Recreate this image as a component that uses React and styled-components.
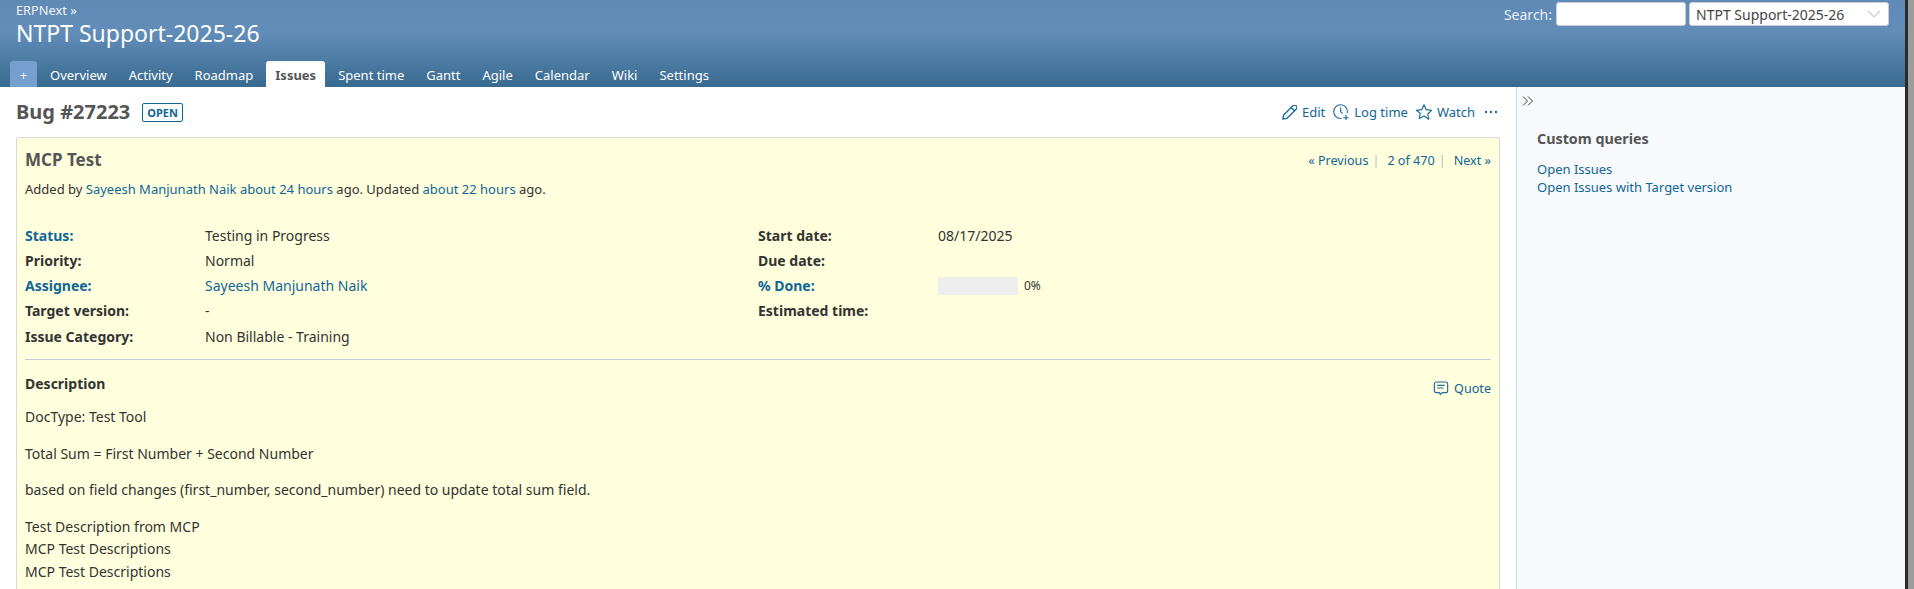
import React from "react";
import styled, { createGlobalStyle } from "styled-components";

const Global = createGlobalStyle`
  html, body { margin: 0; padding: 0; height: 100%; overflow: hidden; background: #fff; }
  body { font-family: "Noto Sans", sans-serif; font-size: 14px; color: #333; }
  #root { height: 100%; }
  a { color: #169; text-decoration: none; }
`;

const Page = styled.div`
  display: flex;
  height: 589px;
  width: 1914px;
`;
const Shell = styled.div`
  width: 1905px;
  display: flex;
  flex-direction: column;
`;
const Scrollbar = styled.div`
  width: 9px;
  background: #9c9c9c;
  border-left: 3px solid #2b2b2b;
  box-sizing: border-box;
`;
const Header = styled.header`
  height: 87px;
  background: linear-gradient(180deg, #5f8ab5 0, #628db9 32px, #386a90 87px);
  color: #fff;
  position: relative;
  flex: none;
`;
const TopRow = styled.div`
  display: flex;
  justify-content: space-between;
  align-items: flex-start;
  padding: 3px 16px 0 16px;
`;
const Breadcrumb = styled.div`
  font-size: 12.8px;
  line-height: 14px;
  color: #f0f4f8;
`;
const Title = styled.h1`
  margin: 0;
  font-size: 23px;
  font-weight: 400;
  line-height: 33px;
  color: #fff;
`;
const SearchBox = styled.div`
  display: flex;
  align-items: center;
  gap: 3px;
  margin-top: -1px;
`;
const SearchLabel = styled.span`
  font-size: 14px;
  color: #e8eef4;
  margin-right: 1px;
`;
const SearchInput = styled.input`
  width: 130px;
  height: 24px;
  box-sizing: border-box;
  border: 1px solid #ccd;
  border-radius: 3px;
  background: #fff;
  padding: 0;
`;
const Select = styled.div`
  width: 200px;
  height: 24px;
  box-sizing: border-box;
  border: 1px solid #ccd;
  border-radius: 3px;
  background: #fff;
  color: #444;
  font-size: 14px;
  line-height: 24px;
  padding-left: 6px;
  position: relative;
`;
const Chevron = styled.svg`
  position: absolute;
  right: 7px;
  top: 5px;
`;
const Tabs = styled.nav`
  position: absolute;
  left: 10px;
  bottom: 0;
  display: flex;
  gap: 4px;
  height: 26px;
`;
const Tab = styled.a`
  display: block;
  padding: 0 9px;
  font-size: 13px;
  line-height: 28px;
  color: ${(p) => (p.$active ? "#555" : "#fff")};
  font-weight: ${(p) => (p.$active ? 700 : 400)};
  background: ${(p) => (p.$active ? "#fff" : "transparent")};
  border-radius: 3px 3px 0 0;
`;
const PlusTab = styled(Tab)`
  background: #759fcf;
  width: 27px;
  box-sizing: border-box;
  padding: 0;
  text-align: center;
  color: #f0f4f8;
`;
const Body = styled.div`
  display: flex;
  flex: 1;
  min-height: 0;
`;
const Main = styled.main`
  width: 1516px;
  box-sizing: border-box;
  padding: 0 16px;
  flex: none;
`;
const Sidebar = styled.aside`
  flex: 1;
  background: #f8f9fb;
  border-left: 1px solid #d0d7de;
  padding: 0 0 0 20px;
`;
const Toggle = styled.svg`
  display: block;
  margin: 8px 0 0 -15px;
`;
const SideHead = styled.h3`
  margin: 22px 0 0 0;
  font-size: 14.3px;
  line-height: 20px;
  font-weight: 700;
  color: #555;
`;
const SideLinks = styled.div`
  margin-top: 11px;
  font-size: 13px;
  line-height: 18px;
  display: flex;
  flex-direction: column;
`;
const IssueHead = styled.div`
  display: flex;
  justify-content: space-between;
  align-items: center;
  height: 50px;
`;
const HeadLeft = styled.div`
  display: flex;
  align-items: center;
  gap: 12px;
`;
const Heading = styled.h2`
  margin: 0;
  font-size: 20px;
  font-weight: 700;
  color: #555;
  line-height: 28px;
`;
const Badge = styled.span`
  border: 1px solid #169;
  border-radius: 2px;
  color: #169;
  font-size: 11px;
  font-weight: 700;
  line-height: 17px;
  padding: 0 4px;
`;
const Actions = styled.div`
  display: flex;
  align-items: center;
  gap: 8px;
`;
const Action = styled.a`
  display: inline-flex;
  align-items: center;
  gap: 5px;
  font-size: 13px;
`;
const More = styled.span`
  display: inline-flex;
  margin: 0 2px 0 1px;
`;
const Box = styled.section`
  background: #ffffdd;
  border: 1px solid #d7d7d7;
  border-bottom: 0;
  border-radius: 3px 3px 0 0;
  padding: 0 8px;
  height: 452px;
  box-sizing: border-box;
`;
const BoxTop = styled.div`
  display: flex;
  justify-content: space-between;
  padding-top: 10px;
`;
const Subject = styled.h3`
  margin: 0;
  font-size: 17px;
  line-height: 24px;
  font-weight: 700;
  color: #555;
`;
const Pager = styled.div`
  font-size: 12.6px;
  line-height: 18px;
  padding-top: 4px;
  color: #169;
  display: flex;
`;
const Sep = styled.span`
  color: #bbb;
  margin: 0 8px 0 4px;
`;
const Meta = styled.p`
  margin: 8px 0 0;
  font-size: 13px;
  line-height: 18px;
  color: #333;
`;
const Fields = styled.div`
  display: grid;
  grid-template-columns: 1fr 1fr;
  margin-top: 25px;
  padding-bottom: 10px;
  border-bottom: 1px solid #c8ccd8;
`;
const Col = styled.div`
  display: flex;
  flex-direction: column;
`;
const Row = styled.div`
  display: flex;
  height: ${(p) => (p.$tall ? 26 : 25)}px;
  align-items: center;
  font-size: 14px;
`;
const Label = styled.div`
  width: 180px;
  flex: none;
  font-weight: 700;
  color: ${(p) => (p.$link ? "#169" : "#333")};
`;
const Value = styled.div`
  color: #333;
`;
const Progress = styled.div`
  display: flex;
  align-items: center;
  gap: 6px;
  font-size: 12px;
  line-height: 16px;
`;
const Bar = styled.div`
  width: 80px;
  height: 18px;
  background: #eeeeee;
`;
const DescHead = styled.div`
  display: flex;
  justify-content: space-between;
`;
const DescTitle = styled.h4`
  margin: 15px 0 0;
  font-size: 14px;
  line-height: 18px;
  font-weight: 700;
  color: #333;
`;
const Quote = styled.a`
  display: inline-flex;
  align-items: center;
  gap: 5px;
  font-size: 12.6px;
  margin-top: 19px;
  height: 18px;
`;
const Para = styled.p`
  margin: ${(p) => (p.$first ? 9 : 0)}px 0 ${(p) => (p.$tight ? 0 : 14)}px;
  font-size: 14px;
  line-height: 22.6px;
  color: #333;
`;

const blue = "#1a6a9c";

const Pencil = () => (
  <svg width="15" height="15" viewBox="3 3 18 18" fill="none" stroke={blue} strokeWidth="1.6" strokeLinecap="round" strokeLinejoin="round">
    <path d="M4 20l1-5L16 4a2.8 2.8 0 0 1 4 4L9 19z" />
    <path d="M14 6l4 4" />
  </svg>
);
const Clock = () => (
  <svg width="16" height="16" viewBox="2 2 21 21" fill="none" stroke={blue} strokeWidth="1.5" strokeLinecap="round" strokeLinejoin="round">
    <path d="M20.9 13a9 9 0 1 0-8.4 8" />
    <path d="M12 7v5l2 2" />
    <path d="M16 20h6M19 17v6" />
  </svg>
);
const Star = () => (
  <svg width="16" height="16" viewBox="1.5 1.5 21 21" fill="none" stroke={blue} strokeWidth="1.5" strokeLinejoin="round">
    <path d="M12 2.5l3 6.4 7 .9-5.1 4.8 1.3 6.9L12 17.2l-6.2 3.3 1.3-6.9L2 9.8l7-.9z" />
  </svg>
);
const Dots = () => (
  <svg width="14" height="14" viewBox="0 0 14 14" fill={blue}>
    <circle cx="2" cy="7" r="1.2" />
    <circle cx="7" cy="7" r="1.2" />
    <circle cx="12" cy="7" r="1.2" />
  </svg>
);
const Comment = () => (
  <svg width="16" height="16" viewBox="0 0 24 24" fill="none" stroke={blue} strokeWidth="1.7" strokeLinecap="round" strokeLinejoin="round">
    <path d="M5 3h14a3 3 0 0 1 3 3v10a3 3 0 0 1-3 3h-5l-3 3-1-3H5a3 3 0 0 1-3-3V6a3 3 0 0 1 3-3z" />
    <path d="M7 8h10M7 12h8" />
  </svg>
);

const tabs = ["Overview", "Activity", "Roadmap", "Issues", "Spent time", "Gantt", "Agile", "Calendar", "Wiki", "Settings"];

export default function App() {
  return (
    <Page>
      <Global />
      <Shell>
        <Header>
          <TopRow>
            <div>
              <Breadcrumb>ERPNext »</Breadcrumb>
              <Title>NTPT Support-2025-26</Title>
            </div>
            <SearchBox>
              <SearchLabel>Search:</SearchLabel>
              <SearchInput />
              <Select>
                NTPT Support-2025-26
                <Chevron width="14" height="12" viewBox="0 0 14 12" fill="none" stroke="#c9cdd8" strokeWidth="1.2">
                  <path d="M1 3l6 6 6-6" />
                </Chevron>
              </Select>
            </SearchBox>
          </TopRow>
          <Tabs>
            <PlusTab>+</PlusTab>
            {tabs.map((t) => (
              <Tab key={t} $active={t === "Issues"}>{t}</Tab>
            ))}
          </Tabs>
        </Header>
        <Body>
          <Main>
            <IssueHead>
              <HeadLeft>
                <Heading>Bug #27223</Heading>
                <Badge>OPEN</Badge>
              </HeadLeft>
              <Actions>
                <Action><Pencil />Edit</Action>
                <Action><Clock />Log time</Action>
                <Action><Star />Watch</Action>
                <More><Dots /></More>
              </Actions>
            </IssueHead>
            <Box>
              <BoxTop>
                <Subject>MCP Test</Subject>
                <Pager>
                  <a>« Previous</a><Sep>|</Sep>
                  <a>2 of 470</a><Sep>|</Sep>
                  <a>Next »</a>
                </Pager>
              </BoxTop>
              <Meta>
                Added by <a>Sayeesh Manjunath Naik</a> <a>about 24 hours</a> ago. Updated <a>about 22 hours</a> ago.
              </Meta>
              <Fields>
                <Col>
                  <Row><Label $link>Status:</Label><Value>Testing in Progress</Value></Row>
                  <Row><Label>Priority:</Label><Value>Normal</Value></Row>
                  <Row><Label $link>Assignee:</Label><Value><a>Sayeesh Manjunath Naik</a></Value></Row>
                  <Row><Label>Target version:</Label><Value>-</Value></Row>
                  <Row $tall><Label>Issue Category:</Label><Value>Non Billable - Training</Value></Row>
                </Col>
                <Col>
                  <Row><Label>Start date:</Label><Value>08/17/2025</Value></Row>
                  <Row><Label>Due date:</Label><Value /></Row>
                  <Row><Label $link>% Done:</Label><Progress><Bar />0%</Progress></Row>
                  <Row><Label>Estimated time:</Label><Value /></Row>
                </Col>
              </Fields>
              <DescHead>
                <DescTitle>Description</DescTitle>
                <Quote><Comment />Quote</Quote>
              </DescHead>
              <Para $first>DocType: Test Tool</Para>
              <Para>Total Sum = First Number + Second Number</Para>
              <Para>based on field changes (first_number, second_number) need to update total sum field.</Para>
              <Para $tight>Test Description from MCP</Para>
              <Para $tight>MCP Test Descriptions</Para>
              <Para $tight>MCP Test Descriptions</Para>
            </Box>
          </Main>
          <Sidebar>
            <Toggle width="12" height="12" viewBox="0 0 12 12" fill="none" stroke="#444" strokeWidth="1">
              <path d="M1 1.5l4.5 4.5L1 10.5M6 1.5l4.5 4.5L6 10.5" />
            </Toggle>
            <SideHead>Custom queries</SideHead>
            <SideLinks>
              <a>Open Issues</a>
              <a>Open Issues with Target version</a>
            </SideLinks>
          </Sidebar>
        </Body>
      </Shell>
      <Scrollbar />
    </Page>
  );
}
